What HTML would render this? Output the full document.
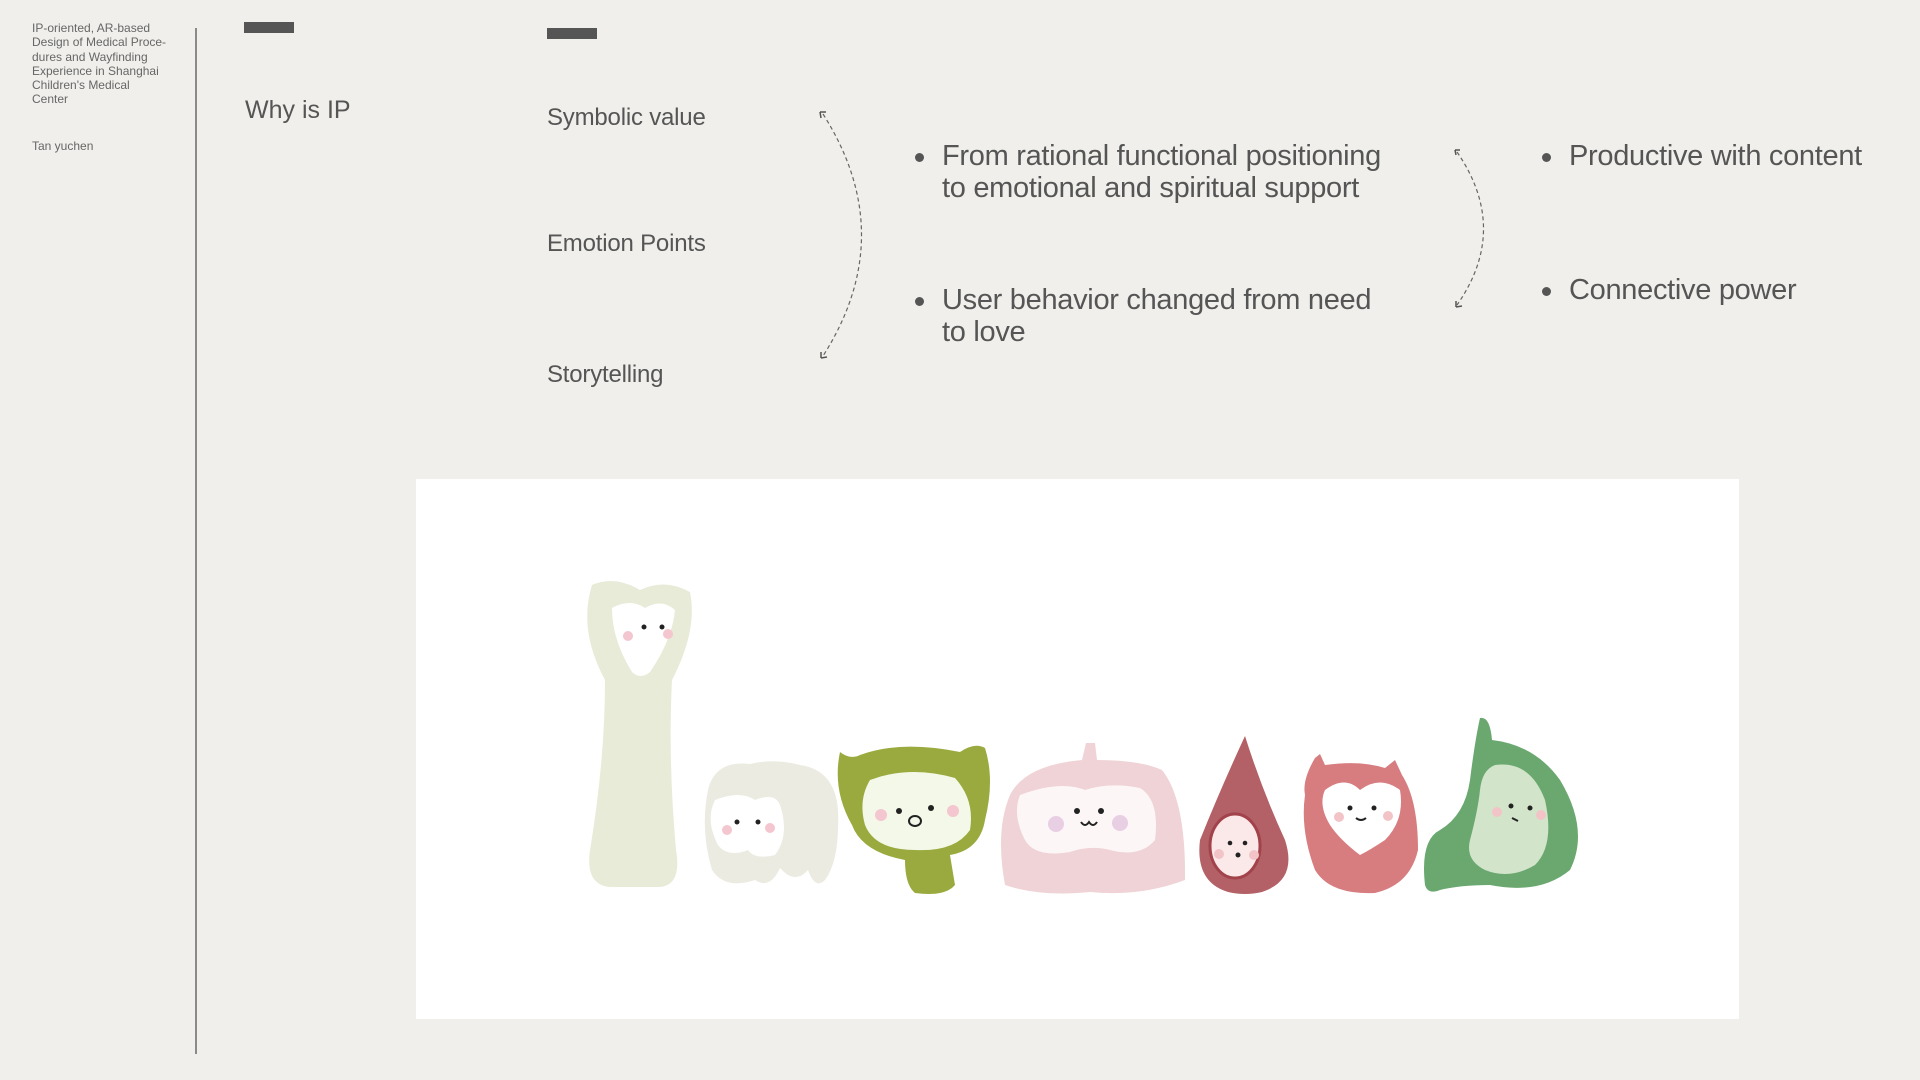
<!DOCTYPE html>
<html><head><meta charset="utf-8"><style>
html,body{margin:0;padding:0;}
body{width:1920px;height:1080px;background:#f0efeb;position:relative;overflow:hidden;font-family:"Liberation Sans",sans-serif;color:#555;}
.a{position:absolute;white-space:nowrap;}
.side{left:32px;top:21px;font-size:12px;line-height:14.3px;color:#666;}
.bar{position:absolute;background:#555;}
.h{font-size:24px;letter-spacing:-0.2px;}
.b{font-size:29px;line-height:32px;letter-spacing:-0.3px;}
.dot{position:absolute;width:9px;height:9px;border-radius:50%;background:#555;}
</style></head><body>
<div class="a side">IP-oriented, AR-based<br>Design of Medical Proce-<br>dures and Wayfinding<br>Experience in Shanghai<br>Children's Medical<br>Center</div>
<div class="a side" style="top:139px">Tan yuchen</div>
<div style="position:absolute;left:195px;top:28px;width:2px;height:1026px;background:#8a8a8a"></div>
<div class="bar" style="left:244px;top:22px;width:50px;height:11px"></div>
<div class="bar" style="left:547px;top:28px;width:50px;height:11px"></div>
<div class="a" style="left:245px;top:96px;font-size:25px;">Why is IP</div>
<div class="a h" style="left:547px;top:104px">Symbolic value</div>
<div class="a h" style="left:547px;top:230px">Emotion Points</div>
<div class="a h" style="left:547px;top:361px">Storytelling</div>
<svg style="position:absolute;left:0;top:0" width="1920" height="1080">
<path d="M823 114 Q900 235 823 356" fill="none" stroke="#666" stroke-width="1.2" stroke-dasharray="4 3"/>
<path d="M820 112 l6 0 M820 112 l1 6" stroke="#555" stroke-width="1.5"/>
<path d="M821 358 l6 -1 M821 358 l0 -6" stroke="#555" stroke-width="1.5"/>
<path d="M1457 152 Q1510 229 1457 305" fill="none" stroke="#666" stroke-width="1.2" stroke-dasharray="4 3"/>
<path d="M1455 150 l5 0 M1455 150 l1 5" stroke="#555" stroke-width="1.5"/>
<path d="M1456 307 l6 -1 M1456 307 l0 -6" stroke="#555" stroke-width="1.5"/>
</svg>
<div class="dot" style="left:915px;top:153px"></div>
<div class="a b" style="left:942px;top:140px">From rational functional positioning<br>to emotional and spiritual support</div>
<div class="dot" style="left:915px;top:297px"></div>
<div class="a b" style="left:942px;top:284px">User behavior changed from need<br>to love</div>
<div class="dot" style="left:1542px;top:153px"></div>
<div class="a b" style="left:1569px;top:140px">Productive with content</div>
<div class="dot" style="left:1542px;top:287px"></div>
<div class="a b" style="left:1569px;top:274px">Connective power</div>
<div style="position:absolute;left:416px;top:479px;width:1323px;height:540px;background:#fff"></div>
<svg style="position:absolute;left:0;top:0" width="1920" height="1080">
<!-- bone -->
<path d="M592 585 Q615 575 640 590 Q665 578 690 592 Q698 630 672 680 Q668 760 676 850 Q682 885 660 887 L610 887 Q585 885 590 850 Q605 760 605 680 Q578 630 592 585Z" fill="#e9ebd9"/>
<path d="M612 608 Q630 598 645 608 Q662 598 675 610 Q672 640 650 672 Q640 680 632 672 Q612 640 612 608Z" fill="#fff"/>
<circle cx="644" cy="627" r="2.5" fill="#222"/><circle cx="662" cy="627" r="2.5" fill="#222"/>
<circle cx="628" cy="636" r="5" fill="#f4c6cf"/><circle cx="668" cy="634" r="5" fill="#f4c6cf"/>
<!-- tooth -->
<path d="M708 790 Q715 760 750 764 Q775 758 800 765 Q835 770 838 810 Q840 860 825 880 Q815 890 808 870 Q795 885 780 868 Q770 890 755 880 Q725 890 712 870 Q700 830 708 790Z" fill="#ecebe2"/>
<path d="M715 800 Q740 790 755 800 Q775 792 780 805 Q790 835 775 855 Q755 860 748 850 Q728 858 718 845 Q705 820 715 800Z" fill="#fff"/>
<circle cx="737" cy="822" r="2.5" fill="#222"/><circle cx="758" cy="822" r="2.5" fill="#222"/>
<circle cx="727" cy="830" r="5" fill="#f4c6cf"/><circle cx="770" cy="828" r="5" fill="#f4c6cf"/>
<!-- green -->
<path d="M840 752 Q850 760 860 755 Q900 740 960 752 Q975 742 985 748 Q995 780 985 820 Q980 850 950 855 L955 885 Q945 897 915 893 Q905 885 905 860 Q862 852 852 825 Q832 790 840 752Z" fill="#9aaa3e"/>
<path d="M870 780 Q910 765 955 778 Q975 800 970 830 Q955 852 915 850 Q875 850 865 825 Q858 800 870 780Z" fill="#f3f8e8"/>
<circle cx="899" cy="811" r="3" fill="#222"/><circle cx="931" cy="808" r="3" fill="#222"/>
<ellipse cx="915" cy="821" rx="6" ry="5" fill="none" stroke="#222" stroke-width="2"/>
<circle cx="881" cy="815" r="6" fill="#f4c6cf"/><circle cx="953" cy="811" r="6" fill="#f4c6cf"/>
<!-- pink -->
<path d="M1082 760 L1086 743 L1095 743 L1097 760 Q1140 760 1162 770 Q1186 800 1185 880 Q1140 897 1090 892 Q1040 897 1005 885 Q995 830 1010 795 Q1025 765 1082 760Z" fill="#f0d3d6"/>
<path d="M1020 795 Q1060 780 1085 790 Q1110 782 1140 788 Q1160 800 1155 840 Q1140 858 1110 850 Q1090 845 1070 852 Q1035 858 1025 840 Q1012 815 1020 795Z" fill="#fdf6f7"/>
<circle cx="1077" cy="811" r="3" fill="#222"/><circle cx="1101" cy="811" r="3" fill="#222"/>
<path d="M1081 822 q4 6 8 0 q4 6 8 0" fill="none" stroke="#222" stroke-width="2"/>
<circle cx="1056" cy="824" r="8" fill="#e8cfe3"/><circle cx="1120" cy="823" r="8" fill="#e8cfe3"/>
<!-- drop -->
<path d="M1245 736 Q1262 790 1285 840 Q1298 880 1262 892 Q1245 896 1228 892 Q1195 882 1200 840 Q1220 790 1245 736Z" fill="#b36066"/>
<ellipse cx="1235" cy="846" rx="25" ry="32" fill="#fbe9ea" stroke="#a2424a" stroke-width="3"/>
<circle cx="1230" cy="843" r="2.3" fill="#222"/><circle cx="1245" cy="843" r="2.3" fill="#222"/>
<circle cx="1238" cy="855" r="2.5" fill="#222"/>
<circle cx="1219" cy="854" r="5" fill="#f2c4c8"/><circle cx="1254" cy="855" r="5" fill="#f2c4c8"/>
<!-- heart -->
<path d="M1315 758 L1320 754 L1325 765 Q1360 760 1385 768 L1395 760 L1402 775 Q1418 800 1418 850 Q1410 885 1375 893 Q1330 895 1315 870 Q1300 830 1305 795 Q1302 780 1315 758Z" fill="#d77d80"/>
<path d="M1325 790 Q1345 775 1360 790 Q1380 775 1400 790 Q1405 820 1385 840 Q1370 850 1360 855 Q1340 840 1330 825 Q1318 805 1325 790Z" fill="#fff"/>
<circle cx="1350" cy="808" r="2.5" fill="#222"/><circle cx="1374" cy="808" r="2.5" fill="#222"/>
<path d="M1356 818 q5 4 10 0" fill="none" stroke="#222" stroke-width="2"/>
<circle cx="1339" cy="817" r="5" fill="#f2c4c8"/><circle cx="1388" cy="816" r="5" fill="#f2c4c8"/>
<!-- stomach -->
<path d="M1480 718 Q1490 716 1492 740 Q1535 745 1560 780 Q1590 830 1570 870 Q1540 895 1490 885 Q1460 885 1440 890 Q1428 895 1425 885 Q1420 840 1440 830 Q1465 815 1470 780 Q1475 740 1480 718Z" fill="#6aa870"/>
<path d="M1495 765 Q1530 760 1545 800 Q1555 845 1535 865 Q1510 880 1485 870 Q1465 860 1470 840 Q1478 810 1480 790 Q1482 770 1495 765Z" fill="#d2e4c9"/>
<circle cx="1511" cy="806" r="2.5" fill="#222"/><circle cx="1530" cy="808" r="2.5" fill="#222"/>
<path d="M1512 818 l6 3" stroke="#222" stroke-width="2"/>
<circle cx="1497" cy="812" r="5" fill="#f2c4c8"/><circle cx="1541" cy="815" r="5" fill="#f2c4c8"/>
</svg>
</body></html>
